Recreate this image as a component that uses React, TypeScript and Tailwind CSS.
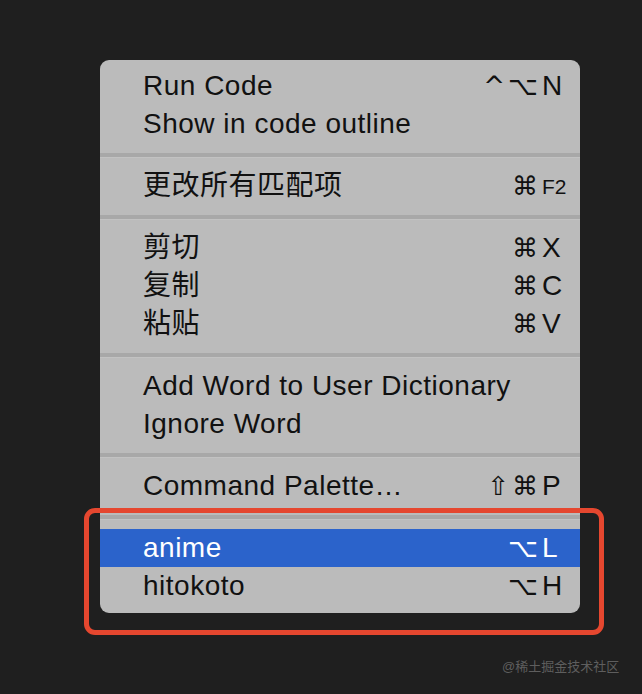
const font = { fontFamily: '"Liberation Sans", "Noto Sans CJK SC", sans-serif' };

type Item = { label: string; mods?: string; key?: string; small?: boolean; active?: boolean };

const groups: Item[][] = [
  [
    { label: 'Run Code', mods: '^⌥', key: 'N' },
    { label: 'Show in code outline' },
  ],
  [{ label: '更改所有匹配项', mods: '⌘', key: 'F2', small: true }],
  [
    { label: '剪切', mods: '⌘', key: 'X' },
    { label: '复制', mods: '⌘', key: 'C' },
    { label: '粘贴', mods: '⌘', key: 'V' },
  ],
  [{ label: 'Add Word to User Dictionary' }, { label: 'Ignore Word' }],
  [{ label: 'Command Palette…', mods: '⇧⌘', key: 'P' }],
  [
    { label: 'anime', mods: '⌥', key: 'L', active: true },
    { label: 'hitokoto', mods: '⌥', key: 'H' },
  ],
];

function Row({ item }: { item: Item }) {
  return (
    <div
      className={`flex h-[38px] items-center pl-[43px] pr-[14px] text-[28px] ${
        item.active ? 'bg-[#2b63cb] text-white' : 'text-[#111]'
      }`}
    >
      <span className="flex-1 leading-none tracking-[0.5px]">{item.label}</span>
      {item.key && (
        <span className="flex items-center">
          <span
            className="text-right text-[26px] leading-none tracking-[3px]"
            style={{ fontFamily: '"DejaVu Sans", sans-serif' }}
          >
            {item.mods}
          </span>
          <span className={`ml-[1px] w-[24px] leading-none ${item.small ? 'text-[21px]' : ''}`}>
            {item.key}
          </span>
        </span>
      )}
    </div>
  );
}

export default function App() {
  return (
    <div className="relative h-[694px] w-[642px] overflow-hidden bg-[#1f1f1f]" style={font}>
      <div className="pl-[100px] pt-[60px]">
        <div className="w-[480px] rounded-[9px] bg-[#bbbbbb] pb-[8px] pt-[7px]">
          {groups.map((g, i) => (
            <div key={i}>
              {i > 0 && (
                <div className="h-[24px] pt-[10px]">
                  <div className="h-[4px] bg-[#a8a8a8]" />
                  <div className="h-[1px] bg-[#c2c2c2]" />
                </div>
              )}
              {g.map((item) => (
                <Row key={item.label} item={item} />
              ))}
            </div>
          ))}
        </div>
      </div>
      <div className="absolute left-[84px] top-[508px] h-[127px] w-[520px] rounded-[11px] border-[5px] border-[#e5472f]" />
      <div className="absolute left-[502px] top-[657px] text-[13px] text-[#5e5e5e]">@稀土掘金技术社区</div>
    </div>
  );
}
